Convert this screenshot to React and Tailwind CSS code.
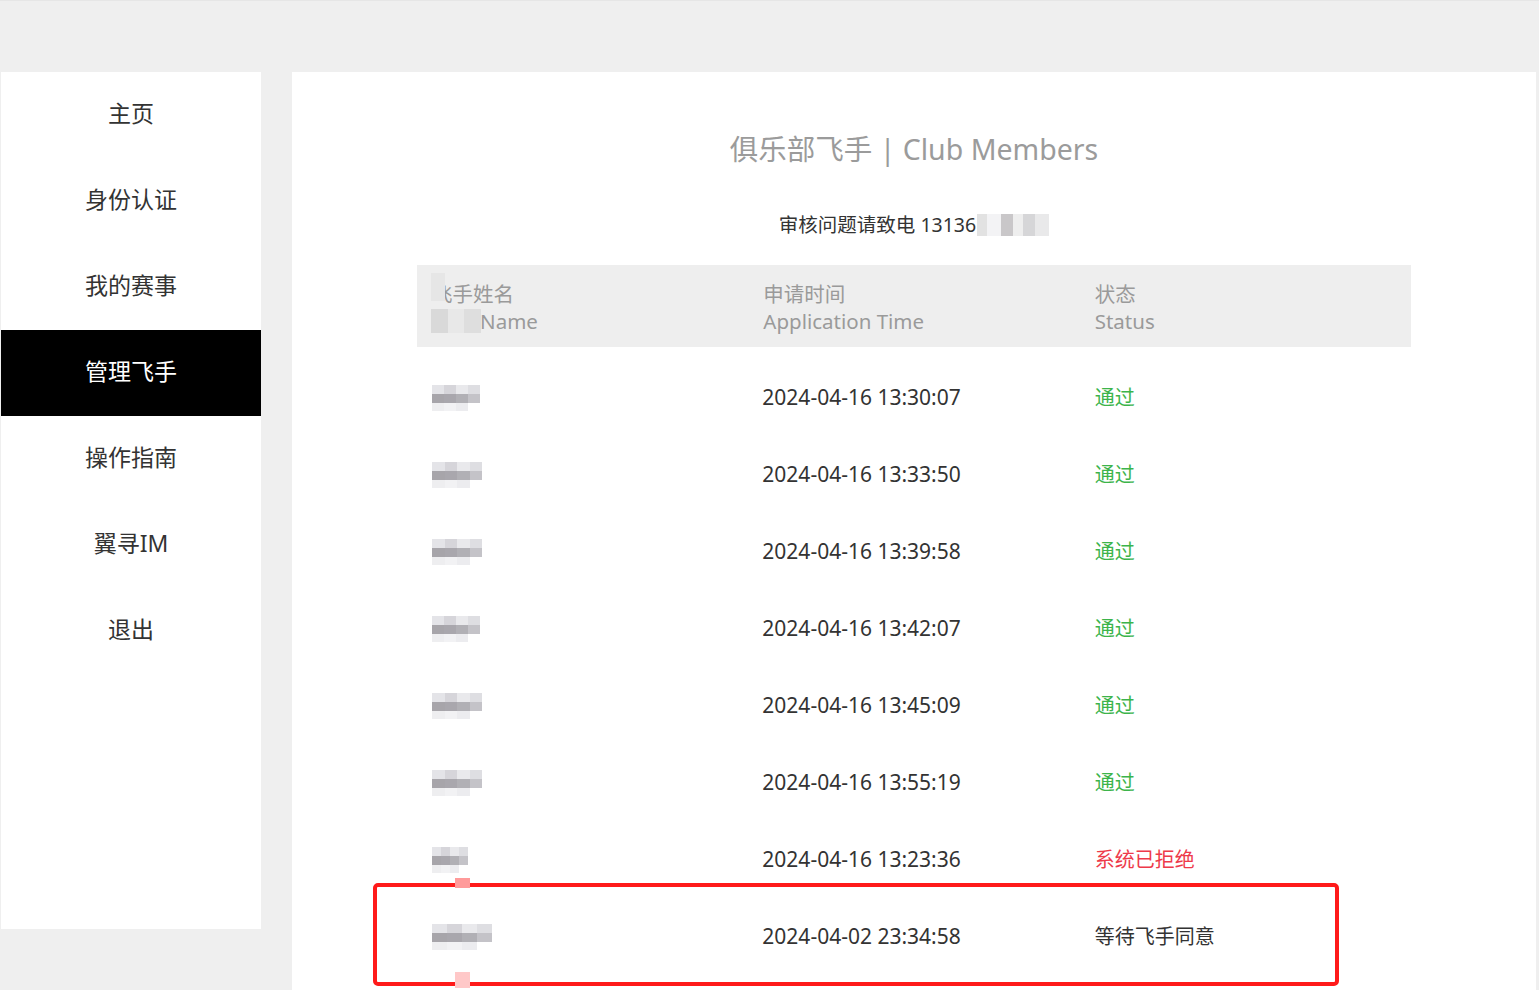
import React from "react";

const rows = [
  { time: "2024-04-16 13:30:07", status: "通过", kind: "ok", blur: "w-[48px]" },
  { time: "2024-04-16 13:33:50", status: "通过", kind: "ok", blur: "w-[50px]" },
  { time: "2024-04-16 13:39:58", status: "通过", kind: "ok", blur: "w-[50px]" },
  { time: "2024-04-16 13:42:07", status: "通过", kind: "ok", blur: "w-[48px]" },
  { time: "2024-04-16 13:45:09", status: "通过", kind: "ok", blur: "w-[50px]" },
  { time: "2024-04-16 13:55:19", status: "通过", kind: "ok", blur: "w-[50px]" },
  { time: "2024-04-16 13:23:36", status: "系统已拒绝", kind: "no", blur: "w-[36px]" },
  { time: "2024-04-02 23:34:58", status: "等待飞手同意", kind: "wait", blur: "w-[60px]" },
];

const nav = ["主页", "身份认证", "我的赛事", "管理飞手", "操作指南", "翼寻IM", "退出"];

function Blur({ w }) {
  return (
    <div className={`relative h-[26px] ${w}`}>
      <div className="absolute inset-0 flex flex-col">
        <div className="h-[9px] flex">
          <div className="flex-1 bg-[#e4e4e8]" />
          <div className="flex-1 bg-[#d6d5da]" />
          <div className="flex-1 bg-[#e9e9ec]" />
          <div className="flex-1 bg-[#dedee2]" />
        </div>
        <div className="h-[9px] flex">
          <div className="flex-1 bg-[#a7a5aa]" />
          <div className="flex-1 bg-[#a9a7ad]" />
          <div className="flex-1 bg-[#b1b0b5]" />
          <div className="flex-1 bg-[#c4c3c8]" />
        </div>
        <div className="h-[8px] flex">
          <div className="flex-1 bg-[#eeeef0]" />
          <div className="flex-1 bg-[#f2f2f4]" />
          <div className="flex-1 bg-[#ececef]" />
          <div className="flex-1 bg-white" />
        </div>
      </div>
    </div>
  );
}

export default function App() {
  const font = { fontFamily: '"Noto Sans", "Noto Sans CJK SC", sans-serif' };
  return (
    <div className="min-h-[990px] bg-[#efefef] overflow-hidden" style={font}>
      <div className="h-[72px] border-t border-[#e6e6e6]" />
      <div className="flex pl-[1px] pr-[3px] gap-[31px]">
        <aside className="w-[260px] h-[857px] bg-white shrink-0 flex flex-col">
          {nav.map((n) => (
            <div
              key={n}
              className={`h-[86px] flex items-center justify-center text-[23px] pb-[3px] ${
                n === "管理飞手" ? "bg-black text-white" : "text-[#333]"
              }`}
            >
              {n}
            </div>
          ))}
        </aside>
        <main className="flex-1 bg-white min-h-[918px] flex flex-col items-center relative">
          <h1 className="mt-[55px] text-[28.5px] leading-[44px] text-[#9b9b9b]">
            俱乐部飞手 | Club Members
          </h1>
          <div className="mt-[40px] text-[19.5px] leading-[28px] text-[#333] flex items-center">
            审核问题请致电 13136
            <span className="inline-flex h-[22px] ml-[1px]">
              <span className="w-[10px] bg-[#e2e2e2]" />
              <span className="w-[14px] bg-[#f3f3f5]" />
              <span className="w-[12px] bg-[#c9c7c9]" />
              <span className="w-[10px] bg-[#eeeeee]" />
              <span className="w-[12px] bg-[#d6d6d8]" />
              <span className="w-[14px] bg-[#e9e9ea]" />
            </span>
          </div>
          <div className="mt-[26px] w-[994px]">
            <div className="h-[82px] bg-[#eeeeee] grid grid-cols-3 items-center text-[20.5px] leading-[27px] text-[#9a9a9a] pt-[3px]">
              <div className="pl-[15px] relative">
                <div>飞手姓名</div>
                <div>Pilot Name</div>
                <div className="absolute left-[14px] top-[-8px] w-[14px] h-[28px] bg-[#e6e6e6]" />
                <div className="absolute left-[14px] top-[28px] w-[50px] h-[24px] flex">
                  <div className="flex-1 bg-[#d9d9d9]" />
                  <div className="flex-1 bg-[#e8e8e8]" />
                  <div className="flex-1 bg-[#dedede]" />
                </div>
              </div>
              <div className="pl-[15px]">
                <div>申请时间</div>
                <div>Application Time</div>
              </div>
              <div className="pl-[15px]">
                <div>状态</div>
                <div>Status</div>
              </div>
            </div>
            <div className="pt-[12px]">
              {rows.map((r, i) => (
                <div key={i} className="h-[77px] grid grid-cols-3 items-center text-[21px] text-[#333]">
                  <div className="pl-[15px]">
                    <Blur w={r.blur} />
                  </div>
                  <div className="pl-[14px]">{r.time}</div>
                  <div
                    className={`pl-[15px] text-[20px] ${
                      r.kind === "ok"
                        ? "text-[#3cb44b]"
                        : r.kind === "no"
                        ? "text-[#ee3a4a]"
                        : "text-[#333]"
                    }`}
                  >
                    {r.status}
                  </div>
                </div>
              ))}
            </div>
          </div>
          <div className="absolute left-[81px] top-[811px] w-[966px] h-[103px] border-[4px] border-[#ff1a1a] rounded-[5px] pointer-events-none" />
          <div className="absolute left-[163px] top-[806px] w-[15px] h-[10px] bg-[#ff9a9a]" />
          <div className="absolute left-[163px] top-[900px] w-[15px] h-[16px] bg-[#ffc8c8]" />
        </main>
      </div>
    </div>
  );
}
